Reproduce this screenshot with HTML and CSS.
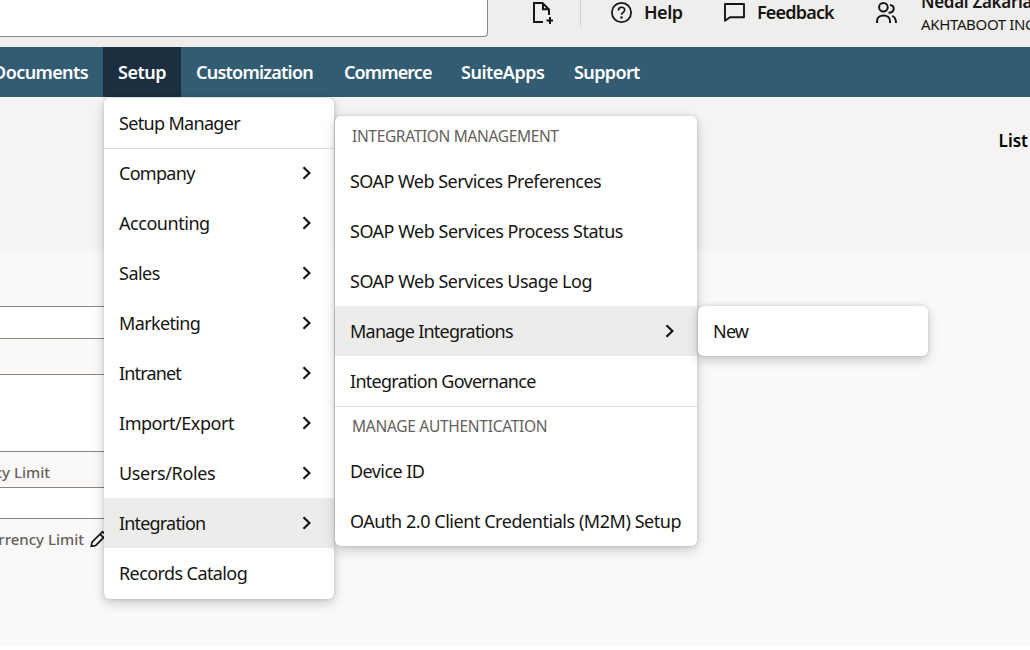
FILE: index.html
```html
<!DOCTYPE html>
<html lang="en">
<head>
<meta charset="utf-8">
<title>Setup</title>
<link rel="stylesheet" href="styles.css">
</head>
<body>
<svg class="defs" width="0" height="0">
  <symbol id="chevron" viewBox="0 0 10 14"><path d="M1.5 1.2 L7.4 7 L1.5 12.8" fill="none" stroke="currentColor" stroke-width="2.2"/></symbol>
</svg>
<div class="app">
  <header class="header">
    <div class="search"></div>
    <svg class="icon-new" viewBox="0 0 24 24"><path d="M14 22H5V3H13.5L20 9.5V15M14 3V9.3H20" fill="none" stroke="currentColor" stroke-width="2"/><path d="M21 17V24M17.5 20.5H24" stroke="currentColor" stroke-width="2"/></svg>
    <div class="divider"></div>
    <div class="tool help"><svg class="icon" viewBox="0 0 24 24"><circle cx="12.5" cy="12.5" r="9.6" fill="none" stroke="currentColor" stroke-width="1.8"/><path d="M9.4 10.5C9.4 6.2 15.7 6.3 15.7 10C15.7 12.5 12.5 12.2 12.5 14.8" fill="none" stroke="currentColor" stroke-width="1.7"/><circle cx="12.5" cy="17.5" r="1.2" fill="currentColor"/></svg><span>Help</span></div>
    <div class="tool feedback"><svg class="icon" viewBox="0 0 24 24"><path d="M3 4H22V17.2H8L3 20.8Z" fill="none" stroke="currentColor" stroke-width="1.9" stroke-linejoin="round"/></svg><span>Feedback</span></div>
    <svg class="icon icon-people" viewBox="0 0 24 24"><g fill="none" stroke="currentColor" stroke-width="2"><circle cx="9.4" cy="7.2" r="4.3"/><path d="M3 23V21C3 13.5 16 13.5 16 21V23M16 4.9C21.2 4.9 21.2 13 14.5 12.8M18.2 15.9C20.9 17 22 19.5 22 23"/></g></svg>
    <div class="user"><span class="user-name">Nedal Zakaria</span><span class="user-company">AKHTABOOT INC</span></div>
  </header>
  <nav class="nav">
    <a class="tab documents">Documents</a>
    <a class="tab setup">Setup</a>
    <a class="tab customization">Customization</a>
    <a class="tab commerce">Commerce</a>
    <a class="tab suiteapps">SuiteApps</a>
    <a class="tab support">Support</a>
  </nav>
  <section class="title-bar"><span class="list">List</span></section>
  <main class="form">
    <div class="field"></div>
    <div class="field area"></div>
    <div class="label"><span class="label-a">Currency Limit</span></div>
    <div class="field short"></div>
    <div class="label"><span class="label-b">Currency Limit</span><svg class="pencil" viewBox="0 0 20 20"><path d="M3.2 17.3L4 13.2L14.5 2.7L18 6.2L7.5 16.7ZM12 5.2L15.5 8.7" fill="none" stroke="currentColor" stroke-width="1.7"/></svg></div>
  </main>
</div>

<div class="menu menu-setup">
  <a class="item ruled"><span class="t-manager">Setup Manager</span></a>
  <a class="item"><span class="t-company">Company</span><svg class="chevron"><use href="#chevron"/></svg></a>
  <a class="item"><span class="t-accounting">Accounting</span><svg class="chevron"><use href="#chevron"/></svg></a>
  <a class="item"><span class="t-sales">Sales</span><svg class="chevron"><use href="#chevron"/></svg></a>
  <a class="item"><span class="t-marketing">Marketing</span><svg class="chevron"><use href="#chevron"/></svg></a>
  <a class="item"><span class="t-intranet">Intranet</span><svg class="chevron"><use href="#chevron"/></svg></a>
  <a class="item"><span class="t-import">Import/Export</span><svg class="chevron"><use href="#chevron"/></svg></a>
  <a class="item"><span class="t-users">Users/Roles</span><svg class="chevron"><use href="#chevron"/></svg></a>
  <a class="item active"><span class="t-integration">Integration</span><svg class="chevron"><use href="#chevron"/></svg></a>
  <a class="item"><span class="t-records">Records Catalog</span></a>
</div>

<div class="menu menu-integration">
  <div class="heading"><span class="h-integration">INTEGRATION MANAGEMENT</span></div>
  <a class="item"><span class="t-preferences">SOAP Web Services Preferences</span></a>
  <a class="item"><span class="t-status">SOAP Web Services Process Status</span></a>
  <a class="item"><span class="t-usage">SOAP Web Services Usage Log</span></a>
  <a class="item active"><span class="t-manage">Manage Integrations</span><svg class="chevron"><use href="#chevron"/></svg></a>
  <a class="item"><span class="t-governance">Integration Governance</span></a>
  <div class="heading section"><span class="h-auth">MANAGE AUTHENTICATION</span></div>
  <a class="item"><span class="t-device">Device ID</span></a>
  <a class="item"><span class="t-oauth">OAuth 2.0 Client Credentials (M2M) Setup</span></a>
</div>

<div class="menu menu-manage">
  <a class="item"><span class="t-new">New</span></a>
</div>
</body>
</html>
```
FILE: styles.css
```css
* { box-sizing: border-box; }
body { margin: 0; width: 1030px; height: 650px; overflow: hidden; background: #fff; color: #161513; font-family: "Noto Sans", "Open Sans", sans-serif; font-size: 18px; white-space: nowrap; }
.defs { display: block; position: absolute; }
.app { height: 646px; display: flex; flex-direction: column; overflow: hidden; }
.header { height: 47px; flex: none; display: flex; background: #f0eeec; overflow: hidden; }
.search { width: 488px; height: 37px; flex: none; background: #fff; border: solid #8b8580; border-width: 0 1px 1px 0; border-radius: 0 0 4px 0; }
.icon-new { width: 24px; height: 24px; margin-left: 41px; flex: none; }
.divider { width: 1px; height: 27px; margin-left: 27px; background: #d2d0ce; flex: none; }
.tool { display: flex; height: 24px; align-items: center; gap: 11px; font-weight: 600; flex: none; }
.icon { width: 24px; height: 24px; flex: none; }
.help { width: 113px; margin-left: 28px; letter-spacing: -0.5px; }
.feedback { width: 152px; letter-spacing: -0.82px; }
.user { display: flex; flex-direction: column; margin: -10px 0 0 23px; }
.user-name { font-weight: 600; font-size: 17px; line-height: 24px; letter-spacing: -0.3px; }
.user-company { font-size: 15px; line-height: 21px; letter-spacing: -0.35px; }
.nav { height: 50px; flex: none; display: flex; background: #325c72; color: #fff; font-weight: 600; }
.tab { flex: none; padding-left: 15px; line-height: 51px; letter-spacing: -0.4px; }
.documents { width: 103px; padding: 0 15px 0 0; display: flex; justify-content: flex-end; letter-spacing: -0.6px; }
.setup { width: 78px; background: #1b2f40; letter-spacing: -0.5px; }
.customization { width: 148px; letter-spacing: -0.76px; }
.commerce { width: 117px; letter-spacing: -0.88px; }
.suiteapps { width: 113px; letter-spacing: -0.5px; }
.support { letter-spacing: -0.62px; }
.title-bar { height: 154px; flex: none; background: #f5f4f2; display: flex; justify-content: flex-end; padding: 32px 2px 0 0; font-weight: 600; font-size: 17px; line-height: 24px; color: #000; }
.form { flex: 1; background: #fbf9f8; padding-top: 55px; }
.field { width: 104px; height: 33px; background: #fff; border: solid #8b8580; border-width: 1px 0; }
.area { height: 78px; margin-top: 35px; }
.short { height: 32px; }
.label { height: 35px; display: flex; align-items: center; color: #65605c; font-size: 15px; font-weight: 500; padding-top: 5px; }
.label-a { width: 50px; display: flex; justify-content: flex-end; }
.label-b { width: 84px; display: flex; justify-content: flex-end; }
.pencil { width: 20px; height: 20px; margin-left: 4px; color: #161513; }
.menu { position: absolute; background: #fff; border-radius: 6px; box-shadow: 0 4px 12px rgba(0,0,0,.2), 0 0 4px rgba(0,0,0,.12); }
.menu-setup { left: 104px; top: 98px; width: 230px; height: 501px; }
.menu-integration { left: 335px; top: 116px; width: 362px; height: 430px; }
.menu-manage { left: 698px; top: 306px; width: 230px; height: 50px; }
.item { display: flex; height: 50px; padding: 0 22px 0 15px; align-items: center; justify-content: space-between; letter-spacing: -0.35px; }
.ruled { box-shadow: 0 1px 0 #e0dfde; }
.active { background: #ececea; }
.chevron { width: 10px; height: 14px; }
.heading { height: 40px; padding-left: 17px; line-height: 40px; font-size: 15.5px; color: #65605c; }
.section { box-shadow: inset 0 1px 0 #e0dfde; line-height: 41px; }
.h-integration { letter-spacing: -0.34px; }
.h-auth { letter-spacing: -0.28px; }
.t-manager { letter-spacing: -0.67px; }
.t-company { letter-spacing: -0.7px; }
.t-accounting { letter-spacing: -0.46px; }
.t-sales { letter-spacing: -0.5px; }
.t-marketing { letter-spacing: -0.64px; }
.t-intranet { letter-spacing: -0.85px; }
.t-import { letter-spacing: -0.46px; }
.t-integration { letter-spacing: -0.82px; }
.t-records { letter-spacing: -0.59px; }
.t-preferences { letter-spacing: -0.53px; }
.t-status { letter-spacing: -0.49px; }
.t-usage { letter-spacing: -0.5px; }
.t-manage { letter-spacing: -0.77px; }
.t-governance { letter-spacing: -0.72px; }
.t-device { letter-spacing: -0.57px; }
.t-oauth { letter-spacing: -0.45px; }
.t-new { letter-spacing: -0.8px; }
```
